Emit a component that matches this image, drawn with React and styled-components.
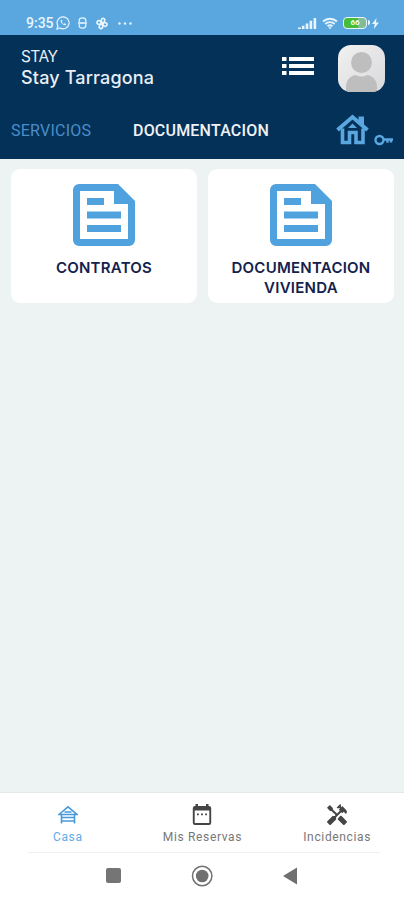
import styled, { createGlobalStyle, css } from 'styled-components'
import { MdHandyman } from 'react-icons/md'

const SKY = '#5aa7e0'
const NAVY = '#043158'

const GlobalStyle = createGlobalStyle`
  * {
    box-sizing: border-box;
  }

  body {
    margin: 0;
    background: #ffffff;
  }

  button {
    appearance: none;
    border: none;
    background: none;
    padding: 0;
    margin: 0;
  }

  svg {
    display: block;
    flex: none;
  }
`

const Screen = styled.div`
  display: flex;
  flex-direction: column;
  width: 100%;
  height: 100vh;
  overflow: hidden;
  font-family: Roboto, sans-serif;
  background: #edf2f3;
`

const StatusBar = styled.div`
  display: flex;
  align-items: center;
  justify-content: space-between;
  height: 35px;
  padding: 11px 25px 0 26px;
  color: #e8f5fd;
  background: ${SKY};
`

const StatusGroup = styled.div`
  display: flex;
  align-items: center;
  gap: ${(props) => props.$gap};
`

const Clock = styled.span`
  width: 28px;
  font-size: 14px;
  font-weight: 500;
  line-height: 16px;
  white-space: nowrap;
`

const Header = styled.header`
  height: 124px;
  flex: none;
  color: #e9eef5;
  background: ${NAVY};
`

const TitleRow = styled.div`
  display: flex;
  align-items: center;
  height: 67px;
  padding: 0 19px 0 21px;
`

const Titles = styled.div`
  flex: 1;
  padding-bottom: 4px;
  font-family: Inter, sans-serif;
`

const Company = styled.div`
  font-size: 15.5px;
  line-height: 21px;
  letter-spacing: -0.6px;
`

const Residence = styled.div`
  font-size: 18px;
  font-weight: 500;
  line-height: 21px;
  letter-spacing: 0.15px;
`

const MenuButton = styled.button`
  margin: 0 23px 5px 0;
`

const Tabs = styled.nav`
  display: flex;
  align-items: center;
  height: 57px;
  padding: 0 10px 0 11px;
`

const Tab = styled.button`
  width: ${(props) => props.$width};
  text-align: left;
  font-family: Roboto, sans-serif;
  font-size: 16px;
  line-height: 20px;
  color: #4b8dca;
  letter-spacing: 0.25px;

  ${(props) =>
    props.$active &&
    css`
      color: #f1f1f5;
      font-weight: 500;
      letter-spacing: 0.2px;
    `}
`

const HomeKey = styled.div`
  display: flex;
  align-items: flex-end;
  gap: 5px;
  margin-left: auto;
`

const Cards = styled.main`
  flex: 1;
  display: grid;
  grid-template-columns: 1fr 1fr;
  grid-auto-rows: 134px;
  align-content: start;
  gap: 11px;
  padding: 10px 10px 0 11px;
`

const Card = styled.button`
  display: flex;
  flex-direction: column;
  align-items: center;
  padding-top: 15px;
  border-radius: 9px;
  background: #ffffff;
`

const CardLabel = styled.span`
  margin-top: 12px;
  max-width: 160px;
  font-family: Inter, sans-serif;
  font-size: 15px;
  font-weight: 600;
  line-height: 20px;
  text-align: center;
  color: #14214c;
  letter-spacing: 0.25px;
`

const BottomNav = styled.nav`
  display: grid;
  grid-template-columns: repeat(3, 1fr);
  flex: none;
  height: 60px;
  border-top: 1px solid #e2e7e8;
  background: #ffffff;
`

const NavItem = styled.button`
  display: flex;
  flex-direction: column;
  align-items: center;
  padding: 10px 0 0 1px;
  font-family: Roboto, sans-serif;
  color: ${(props) => (props.$active ? '#4799dc' : '#454545')};
`

const NavIcon = styled.span`
  display: flex;
  align-items: center;
  justify-content: center;
  height: 23px;
`

const NavLabel = styled.span`
  font-size: 12px;
  line-height: 16px;
  margin-top: 3px;
  letter-spacing: 0.65px;
  color: ${(props) => (props.$active ? '#62aae4' : '#777777')};
`

const SystemBar = styled.div`
  display: flex;
  align-items: center;
  flex: none;
  height: 47px;
  padding: 0 0 2px 105px;
  gap: 69px;
  background: #ffffff;
`

const Divider = styled.div`
  flex: none;
  height: 1px;
  background: linear-gradient(to right, #ffffff 28px, #f1f1f1 28px, #f1f1f1 380px, #ffffff 380px);
`

const WhatsAppIcon = () => (
  <svg width="14" height="14" viewBox="0 0 14 14" fill="none" stroke="currentColor">
    <path d="M1 13l.9-3.2A6 6 0 1 1 4.1 12z" strokeWidth="1.2" />
    <path d="M4.8 4.1c-.7 2.3 2.4 5.7 4.9 5.1l.4-1.3-1.5-.7-.8.7c-1-.4-1.7-1.2-2-2l.6-.8-.6-1.4z" fill="currentColor" stroke="none" />
  </svg>
)

const CapsuleIcon = () => (
  <svg width="9" height="12" viewBox="0 0 9 12" fill="none" stroke="currentColor" strokeWidth="1.2">
    <path d="M1.2 5V3.4C1.2 1.8 2.5.8 4.5.8s3.3 1 3.3 2.6V5M1.2 7v1.5c0 1.7 1.3 2.7 3.3 2.7s3.3-1 3.3-2.7V7" />
    <path d="M0 6h9" strokeWidth="1.6" />
  </svg>
)

const FanIcon = () => (
  <svg width="14" height="13" viewBox="0 0 14 13" fill="none" stroke="currentColor" strokeWidth="1.6">
    <g transform="rotate(18 7 6.5)">
      <path d="M7 6.5C4.5 4.8 4.8 1.3 7 1.3s2.5 3.2 0 5.2zM7 6.5c1.7-2.5 5.2-2.2 5.2 0s-3.2 2.5-5.2 0zM7 6.5c2.5 1.7 2.2 5.2 0 5.2s-2.5-3.2 0-5.2zM7 6.5c-1.7 2.5-5.2 2.2-5.2 0s3.2-2.5 5.2 0z" />
      <circle cx="7" cy="6.5" r="1.3" fill="currentColor" />
    </g>
  </svg>
)

const DotsIcon = () => (
  <svg width="16" height="3" viewBox="0 0 16 3" fill="currentColor">
    <circle cx="2.5" cy="1.5" r="1.2" />
    <circle cx="8" cy="1.5" r="1.2" />
    <circle cx="13.5" cy="1.5" r="1.2" />
  </svg>
)

const SignalIcon = () => (
  <svg width="19" height="13" viewBox="0 0 19 13" fill="currentColor">
    <path d="M0 10.5h2.9V12H0zM3.9 8.8h2.6V12H3.9zM7.7 6.5h2.6V12H7.7zM11.6 3.8h2.6V12h-2.6zM15.6 1h2.6v11h-2.6z" />
  </svg>
)

const WifiIcon = () => (
  <svg width="16" height="13" viewBox="0 0 16 13" fill="none" stroke="currentColor" strokeWidth="1.9">
    <path d="M1 4.5c4-3.7 10-3.7 14 0M3.3 7c2.7-2.5 6.7-2.5 9.4 0M5.6 9.3c1.5-1.3 3.3-1.3 4.8 0" />
    <path d="M6.3 10.2h3.4L8 12.3z" fill="currentColor" stroke="none" />
  </svg>
)

const Battery = styled.div`
  position: relative;
  display: flex;
  align-items: center;
  justify-content: center;
  width: 24px;
  height: 12px;
  border: 1.5px solid #e8f5fd;
  border-radius: 4px;
  font-size: 8px;
  font-weight: 700;
  line-height: 8px;
  color: #f2ffe9;
  background: linear-gradient(to right, #45bd37 62%, #83bd96 62%);

  &::after {
    content: '';
    position: absolute;
    right: -4px;
    top: 2px;
    width: 2px;
    height: 5px;
    border-radius: 0 2px 2px 0;
    background: #e8f5fd;
  }
`

const BoltIcon = () => (
  <svg width="7" height="11" viewBox="0 0 7 11" fill="currentColor">
    <path d="M4.5 0L0 6h2.7L1.8 11 7 4.5H4z" />
  </svg>
)

const ListIcon = () => (
  <svg width="33" height="20" viewBox="0 0 33 20" fill="#ffffff">
    <path d="M0 1h4.500v4H0zM7 1h25v4H7zM0 8h4.500v4H0zM7 8h25v4H7zM0 15h4.500v4H0zM7 15h25v4H7z" />
  </svg>
)

const Avatar = () => (
  <svg width="47" height="47" viewBox="0 0 47 47">
    <defs>
      <clipPath id="avatar-shape">
        <rect width="47" height="47" rx="13" />
      </clipPath>
      <linearGradient id="avatar-back" x1="0" y1="0" x2="1" y2="1">
        <stop offset="0" stopColor="#f1f1f1" />
        <stop offset="1" stopColor="#d9d9dc" />
      </linearGradient>
    </defs>
    <g clipPath="url(#avatar-shape)">
      <rect width="47" height="47" fill="url(#avatar-back)" />
      <circle cx="23.5" cy="17.5" r="10.5" fill="#bebebf" />
      <path d="M8 47v-5c0-8 6-12 10-12 3 2 8 2 11 0 4 0 10 4 10 12v5z" fill="#bebebf" />
    </g>
  </svg>
)

const HouseIcon = () => (
  <svg width="33" height="33" viewBox="0 0 33 33" fill="none" stroke={SKY}>
    <path d="M1.5 16L16.5 3 31.5 16" strokeWidth="3.8" />
    <path d="M22.500 2.500h5.500V13h-2.500l-3-4z" fill={SKY} stroke="none" />
    <path d="M6.500 14.500v14h7V18.500h6.500V28.500h7V14.500" strokeWidth="3.600" />
    <path d="M12 14h9l-4.500-4.500z" fill={SKY} stroke="none" />
  </svg>
)

const KeyIcon = () => (
  <svg width="20" height="14" viewBox="0 0 20 14" fill="none" stroke={SKY} strokeWidth="2.4">
    <circle cx="5.5" cy="7" r="4" />
    <path d="M9.5 6.5H19M13.5 6.5v3.200M17 6.500v3" />
  </svg>
)

const DocumentIcon = () => (
  <svg width="62" height="62" viewBox="0 0 62 62" fill="#4fa2dd" fillRule="evenodd">
    <path d="M6 0H45L62 17V56a6 6 0 0 1-6 6H6a6 6 0 0 1-6-6V6A6 6 0 0 1 6 0zM7 7V55H55V20H41V7z" />
    <path d="M14 14H31V21H14zM14 27.500H48V34.500H14zM14 41H48V48H14z" />
  </svg>
)

const CabinIcon = () => (
  <svg width="20" height="20" viewBox="0 0 20 20" fill="none" stroke="currentColor" strokeWidth="1.6">
    <path d="M1 9.500L10 1.800l9 7.700zM3.500 9.500V18.500M16.500 9.500V18.500M3.500 12.500h13M3.500 16h13M6.500 7h7" />
  </svg>
)

const CalendarIcon = () => (
  <svg width="20" height="22" viewBox="0 0 20 22" fill="currentColor" fillRule="evenodd">
    <path d="M3.500 0h2.500v2h8V0h2.500v2h.5a2.200 2.200 0 0 1 2.200 2.200v14.600A2.200 2.200 0 0 1 17 21H3a2.200 2.200 0 0 1-2.200-2.200V4.200A2.200 2.200 0 0 1 3 2h.5zM2.700 6.500V19h14.600V6.500z" />
    <path d="M5 9.500h1.800v1.800H5zM9.100 9.500h1.800v1.800H9.100zM13.200 9.500H15v1.800h-1.800z" />
  </svg>
)

const RecentsIcon = () => (
  <svg width="17" height="17" viewBox="0 0 17 17">
    <rect x="1" y="1" width="15" height="15" rx="2" fill="#757575" />
  </svg>
)

const CircleIcon = () => (
  <svg width="22" height="22" viewBox="0 0 22 22">
    <circle cx="11.200" cy="11" r="9.700" fill="none" stroke="#727272" strokeWidth="1.5" />
    <circle cx="11.200" cy="11" r="6.300" fill="#707070" />
  </svg>
)

const BackIcon = () => (
  <svg width="15" height="18" viewBox="0 0 15 18">
    <path d="M1 9L15 .5v17z" fill="#707070" />
  </svg>
)

const CARDS = ['CONTRATOS', 'DOCUMENTACION VIVIENDA']

const NAV_ITEMS = [
  { label: 'Casa', icon: <CabinIcon />, active: true },
  { label: 'Mis Reservas', icon: <CalendarIcon /> },
  { label: 'Incidencias', icon: <MdHandyman size={24} /> },
]

function App() {
  return (
    <Screen>
      <GlobalStyle />
      <StatusBar>
        <StatusGroup $gap="8px">
          <StatusGroup $gap="2px">
            <Clock>9:35</Clock>
            <WhatsAppIcon />
          </StatusGroup>
          <CapsuleIcon />
          <FanIcon />
          <DotsIcon />
        </StatusGroup>
        <StatusGroup $gap="5px">
          <SignalIcon />
          <WifiIcon />
          <Battery>66</Battery>
          <BoltIcon />
        </StatusGroup>
      </StatusBar>
      <Header>
        <TitleRow>
          <Titles>
            <Company>STAY</Company>
            <Residence>Stay Tarragona</Residence>
          </Titles>
          <MenuButton aria-label="Menu">
            <ListIcon />
          </MenuButton>
          <Avatar />
        </TitleRow>
        <Tabs>
          <Tab $width="122px">SERVICIOS</Tab>
          <Tab $width="150px" $active>
            DOCUMENTACION
          </Tab>
          <HomeKey>
            <HouseIcon />
            <KeyIcon />
          </HomeKey>
        </Tabs>
      </Header>
      <Cards>
        {CARDS.map((label) => (
          <Card key={label}>
            <DocumentIcon />
            <CardLabel>{label}</CardLabel>
          </Card>
        ))}
      </Cards>
      <BottomNav>
        {NAV_ITEMS.map((item) => (
          <NavItem key={item.label} $active={item.active}>
            <NavIcon>{item.icon}</NavIcon>
            <NavLabel $active={item.active}>{item.label}</NavLabel>
          </NavItem>
        ))}
      </BottomNav>
      <Divider />
      <SystemBar>
        <RecentsIcon />
        <CircleIcon />
        <BackIcon />
      </SystemBar>
    </Screen>
  )
}

export default App
